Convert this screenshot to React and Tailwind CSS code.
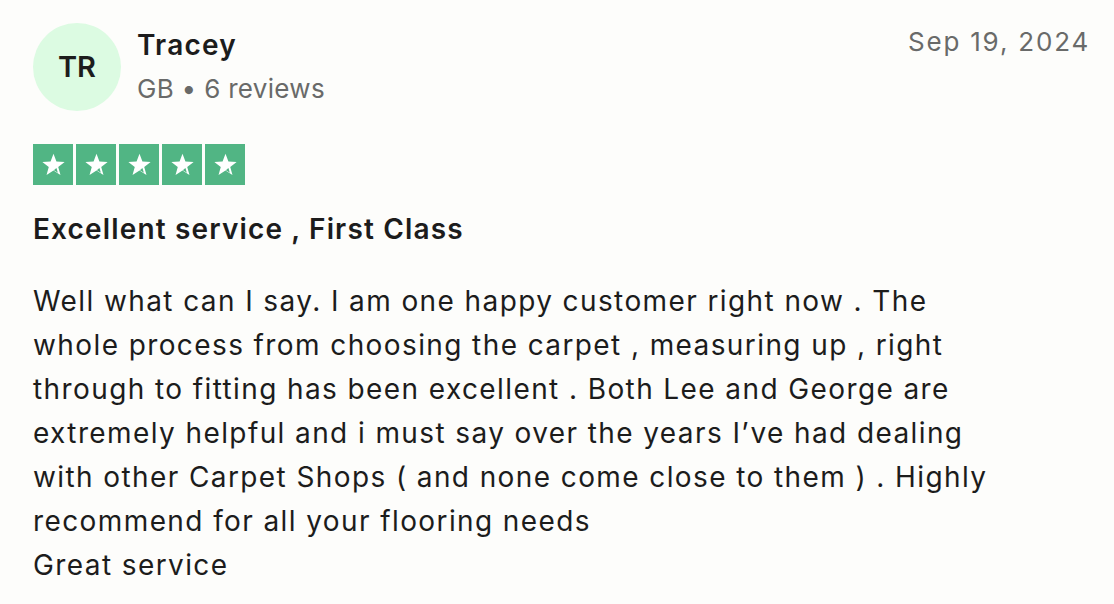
import React from "react";

const lines = [
  "Well what can I say. I am one happy customer right now . The",
  "whole process from choosing the carpet , measuring up , right",
  "through to fitting has been excellent . Both Lee and George are",
  "extremely helpful and i must say over the years I’ve had dealing",
  "with other Carpet Shops ( and none come close to them ) . Highly",
  "recommend for all your flooring needs",
  "Great service",
];

function Star() {
  return (
    <svg viewBox="0 0 24 24" className="w-[27px] h-[27px]">
      <path
        d="M12 2.5l2.6 6.9 7.3.3-5.7 4.6 2 7.1L12 17.3l-6.2 4.1 2-7.1-5.7-4.6 7.3-.3z"
        fill="#ffffff"
      />
      <path d="M14.6 15.2l1.3 4.2-3.6-2.3z" fill="#51b584" />
    </svg>
  );
}

export default function App() {
  return (
    <div
      className="w-[1114px] h-[604px] bg-[#fdfdfb] text-[#1c1c1c] pl-[33px] pr-[24px] pt-[23px]"
      style={{ fontFamily: "Inter, 'Noto Sans', sans-serif" }}
    >
      {/* Header */}
      <div className="flex items-start justify-between">
        <div className="flex items-start gap-[16px]">
          <div className="w-[88px] h-[88px] rounded-full bg-[#dcfbe2] flex items-center justify-center text-[29px] font-semibold">
            TR
          </div>
          <div className="pt-[4px]">
            <div className="text-[28px] leading-[36px] font-semibold tracking-[1.2px]">
              Tracey
            </div>
            <div className="text-[26px] leading-[34px] text-[#696a69] mt-[9px] tracking-[0.3px]">
              GB • 6 reviews
            </div>
          </div>
        </div>
        <div className="text-[26px] leading-[34px] text-[#696a69] pt-[2px] tracking-[1.8px]">
          Sep 19, 2024
        </div>
      </div>

      {/* Stars */}
      <div className="flex gap-[3px] mt-[33px]">
        {[0, 1, 2, 3, 4].map((i) => (
          <div
            key={i}
            className="w-[40px] h-[41px] bg-[#51b584] flex items-center justify-center"
          >
            <Star />
          </div>
        ))}
      </div>

      {/* Title */}
      <h2 className="text-[28px] leading-[36px] font-semibold mt-[26px] tracking-[1.15px]">
        Excellent service , First Class
      </h2>

      {/* Body */}
      <div className="mt-[32px] text-[28px] leading-[44px] tracking-[1.4px]">
        {lines.map((l, i) => (
          <div key={i} className="whitespace-nowrap">
            {l}
          </div>
        ))}
      </div>
    </div>
  );
}
